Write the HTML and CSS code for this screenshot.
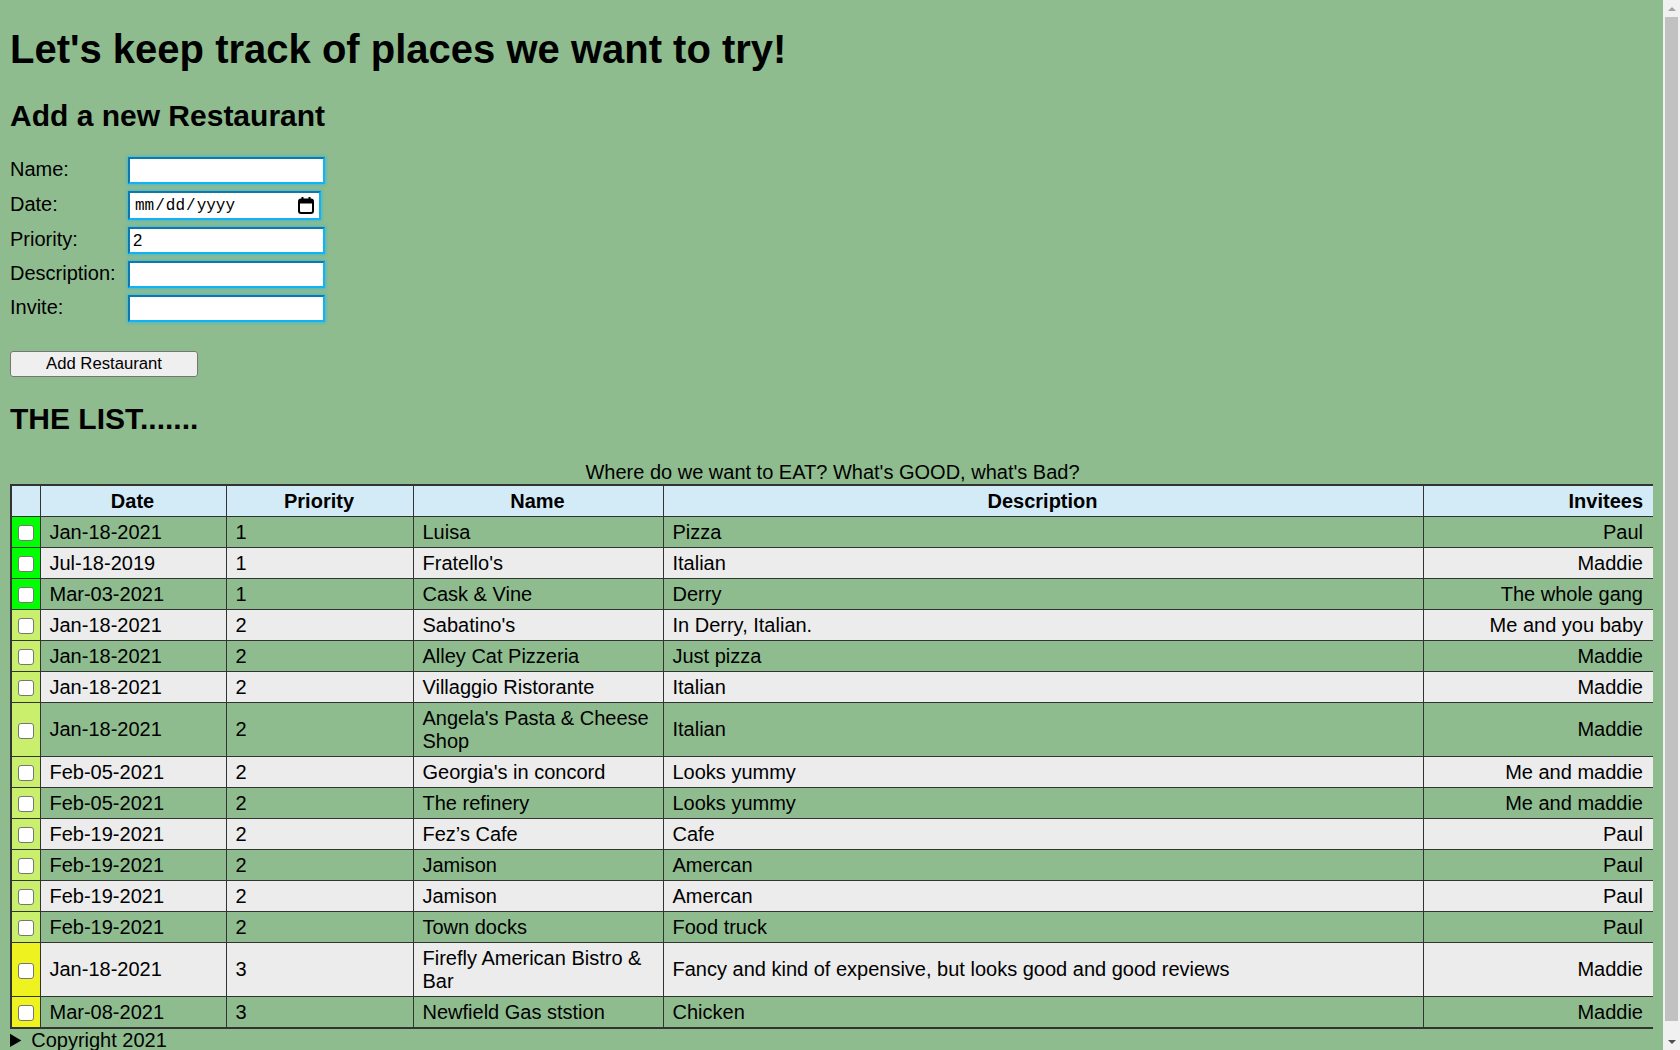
FILE: index.html
```html
<!DOCTYPE html>
<html lang="en">
<head>
<meta charset="utf-8">
<title>Restaurants to try</title>
<link rel="stylesheet" href="styles.css">
</head>
<body>
<h1>Let's keep track of places we want to try!</h1>
<h2>Add a new Restaurant</h2>
<form class="add-form">
  <div class="fields">
    <label for="name">Name:</label><input id="name" class="text-in" type="text">
    <label for="date">Date:</label>
    <span class="date-wrap">
      <input id="date" class="text-in date-in" type="date">
      <svg class="cal-icon" width="16" height="17" viewBox="0 0 16 17" aria-hidden="true">
        <rect x="3.5" y="0" width="2" height="3" fill="#000"/>
        <rect x="10.5" y="0" width="2" height="3" fill="#000"/>
        <rect x="1" y="2.5" width="14" height="13.5" rx="2" ry="2" fill="none" stroke="#000" stroke-width="2"/>
        <rect x="1" y="2.5" width="14" height="4" fill="#000"/>
      </svg>
    </span>
    <label for="priority">Priority:</label><input id="priority" class="text-in" type="text" value="2">
    <label for="desc">Description:</label><input id="desc" class="text-in" type="text">
    <label for="invite">Invite:</label><input id="invite" class="text-in" type="text">
  </div>
  <button type="button" class="add-btn">Add Restaurant</button>
</form>
<h2>THE LIST.......</h2>
<table class="list">
  <caption>Where do we want to EAT? What's GOOD, what's Bad?</caption>
  <colgroup>
    <col class="c-check"><col class="c-date"><col class="c-prio"><col class="c-name"><col class="c-desc"><col class="c-inv">
  </colgroup>
  <thead>
    <tr><th class="check-cell"></th><th>Date</th><th>Priority</th><th>Name</th><th>Description</th><th class="right">Invitees</th></tr>
  </thead>
  <tbody>
    <tr><td class="check-cell p1"><input type="checkbox" class="cb"></td><td>Jan-18-2021</td><td>1</td><td>Luisa</td><td>Pizza</td><td class="right">Paul</td></tr>
    <tr><td class="check-cell p1"><input type="checkbox" class="cb"></td><td>Jul-18-2019</td><td>1</td><td>Fratello's</td><td>Italian</td><td class="right">Maddie</td></tr>
    <tr><td class="check-cell p1"><input type="checkbox" class="cb"></td><td>Mar-03-2021</td><td>1</td><td>Cask &amp; Vine</td><td>Derry</td><td class="right">The whole gang</td></tr>
    <tr><td class="check-cell p2"><input type="checkbox" class="cb"></td><td>Jan-18-2021</td><td>2</td><td>Sabatino's</td><td>In Derry, Italian.</td><td class="right">Me and you baby</td></tr>
    <tr><td class="check-cell p2"><input type="checkbox" class="cb"></td><td>Jan-18-2021</td><td>2</td><td>Alley Cat Pizzeria</td><td>Just pizza</td><td class="right">Maddie</td></tr>
    <tr><td class="check-cell p2"><input type="checkbox" class="cb"></td><td>Jan-18-2021</td><td>2</td><td>Villaggio Ristorante</td><td>Italian</td><td class="right">Maddie</td></tr>
    <tr><td class="check-cell p2"><input type="checkbox" class="cb"></td><td>Jan-18-2021</td><td>2</td><td>Angela's Pasta &amp; Cheese Shop</td><td>Italian</td><td class="right">Maddie</td></tr>
    <tr><td class="check-cell p2"><input type="checkbox" class="cb"></td><td>Feb-05-2021</td><td>2</td><td>Georgia's in concord</td><td>Looks yummy</td><td class="right">Me and maddie</td></tr>
    <tr><td class="check-cell p2"><input type="checkbox" class="cb"></td><td>Feb-05-2021</td><td>2</td><td>The refinery</td><td>Looks yummy</td><td class="right">Me and maddie</td></tr>
    <tr><td class="check-cell p2"><input type="checkbox" class="cb"></td><td>Feb-19-2021</td><td>2</td><td>Fez’s Cafe</td><td>Cafe</td><td class="right">Paul</td></tr>
    <tr><td class="check-cell p2"><input type="checkbox" class="cb"></td><td>Feb-19-2021</td><td>2</td><td>Jamison</td><td>Amercan</td><td class="right">Paul</td></tr>
    <tr><td class="check-cell p2"><input type="checkbox" class="cb"></td><td>Feb-19-2021</td><td>2</td><td>Jamison</td><td>Amercan</td><td class="right">Paul</td></tr>
    <tr><td class="check-cell p2"><input type="checkbox" class="cb"></td><td>Feb-19-2021</td><td>2</td><td>Town docks</td><td>Food truck</td><td class="right">Paul</td></tr>
    <tr><td class="check-cell p3"><input type="checkbox" class="cb"></td><td>Jan-18-2021</td><td>3</td><td>Firefly American Bistro &amp; Bar</td><td>Fancy and kind of expensive, but looks good and good reviews</td><td class="right">Maddie</td></tr>
    <tr><td class="check-cell p3"><input type="checkbox" class="cb"></td><td>Mar-08-2021</td><td>3</td><td>Newfield Gas ststion</td><td>Chicken</td><td class="right">Maddie</td></tr>
  </tbody>
</table>
<details class="footer">
  <summary>Copyright 2021</summary>
  <p>Restaurant list</p>
</details>
<div class="scrollbar" aria-hidden="true">
  <span class="sb-arrow sb-up"></span>
  <span class="sb-thumb"></span>
  <span class="sb-arrow sb-down"></span>
</div>
</body>
</html>
```
FILE: styles.css
```css
html {
  background: #8fbc8f;
}

body {
  margin: 0 27px 10px 10px;
  font-family: "Liberation Sans", Arial, sans-serif;
  font-size: 20px;
  color: #000;
  background: #8fbc8f;
}

h1 {
  font-size: 40px;
  margin: 26.8px 0;
}

h2 {
  font-size: 30px;
  margin: 24.9px 0;
}

.add-form {
  margin: 0;
}

.fields {
  display: grid;
  grid-template-columns: 118px max-content;
  row-gap: 7px;
  align-items: center;
}

.fields label {
  line-height: 23px;
  margin-top: -3px;
}

.text-in {
  box-sizing: border-box;
  width: 197px;
  height: 27px;
  margin: 0;
  padding: 1px 3px;
  font-family: "Liberation Sans", Arial, sans-serif;
  font-size: 16.7px;
  background: #fff;
  border: 2px solid;
  border-color: #0b78b0 #12b3f5 #12b3f5 #0b78b0;
  box-shadow: 0 0 3px 1px rgba(20, 180, 245, 0.55);
  outline: none;
}

.date-wrap {
  position: relative;
  display: block;
  width: 193px;
  height: 29px;
}

.date-in {
  display: block;
  width: 193px;
  height: 29px;
  padding: 1px 28px 1px 4px;
  font-family: "Liberation Mono", monospace;
  font-size: 16px;
}

.date-in::-webkit-calendar-picker-indicator {
  display: none;
}

.cal-icon {
  position: absolute;
  right: 7px;
  top: 6px;
  pointer-events: none;
}

.add-btn {
  display: block;
  box-sizing: border-box;
  width: 188px;
  height: 26px;
  margin-top: 29px;
  padding: 0;
  font-family: "Liberation Sans", Arial, sans-serif;
  font-size: 16.7px;
  color: #000;
  background: #efefef;
  border: 1px solid #767676;
  border-radius: 3px;
}

.list {
  width: 100%;
  table-layout: fixed;
  border-collapse: collapse;
  border: 2px solid #333;
}

.list caption {
  line-height: 23px;
}

.c-check { width: 29px; }
.c-date { width: 186px; }
.c-prio { width: 187px; }
.c-name { width: 250px; }
.c-desc { width: 760px; }
.c-inv { width: 231px; }

.list th,
.list td {
  border: 1px solid #333;
  padding: 3.5px 10px 3.5px 9px;
  line-height: 23px;
  text-align: left;
  vertical-align: middle;
}

.list th {
  background: #d3ebf7;
  text-align: center;
  font-weight: bold;
}

.list tbody tr:nth-child(odd) td {
  background: #8fbc8f;
}

.list tbody tr:nth-child(even) td {
  background: #ececec;
}

.list th.right,
.list td.right {
  text-align: right;
}

.list .check-cell {
  padding: 0;
  text-align: center;
}

.list tbody tr td.p1 { background: #00ff00; }
.list tbody tr td.p2 { background: #c9ef6c; }
.list tbody tr td.p3 { background: #eef21e; }

.cb {
  appearance: none;
  -webkit-appearance: none;
  display: inline-block;
  box-sizing: border-box;
  width: 16px;
  height: 16px;
  margin: 0;
  vertical-align: middle;
  background: #fff;
  border: 1px solid #767676;
  border-radius: 3px;
}

.footer {
  margin: 0;
}

.footer summary {
  line-height: 23px;
  cursor: pointer;
}

.scrollbar {
  position: fixed;
  top: 0;
  right: 0;
  width: 17px;
  height: 100vh;
  display: flex;
  flex-direction: column;
  background: #f1f1f1;
}

.sb-arrow {
  flex: none;
  height: 17px;
  display: flex;
  align-items: center;
  justify-content: center;
}

.sb-up::before {
  content: "";
  border-left: 4px solid transparent;
  border-right: 4px solid transparent;
  border-bottom: 4px solid #a3a3a3;
}

.sb-down::before {
  content: "";
  border-left: 4px solid transparent;
  border-right: 4px solid transparent;
  border-top: 4px solid #505050;
}

.sb-thumb {
  flex: 1;
  margin: 0 2px 12px;
  background: #c1c1c1;
}
```
